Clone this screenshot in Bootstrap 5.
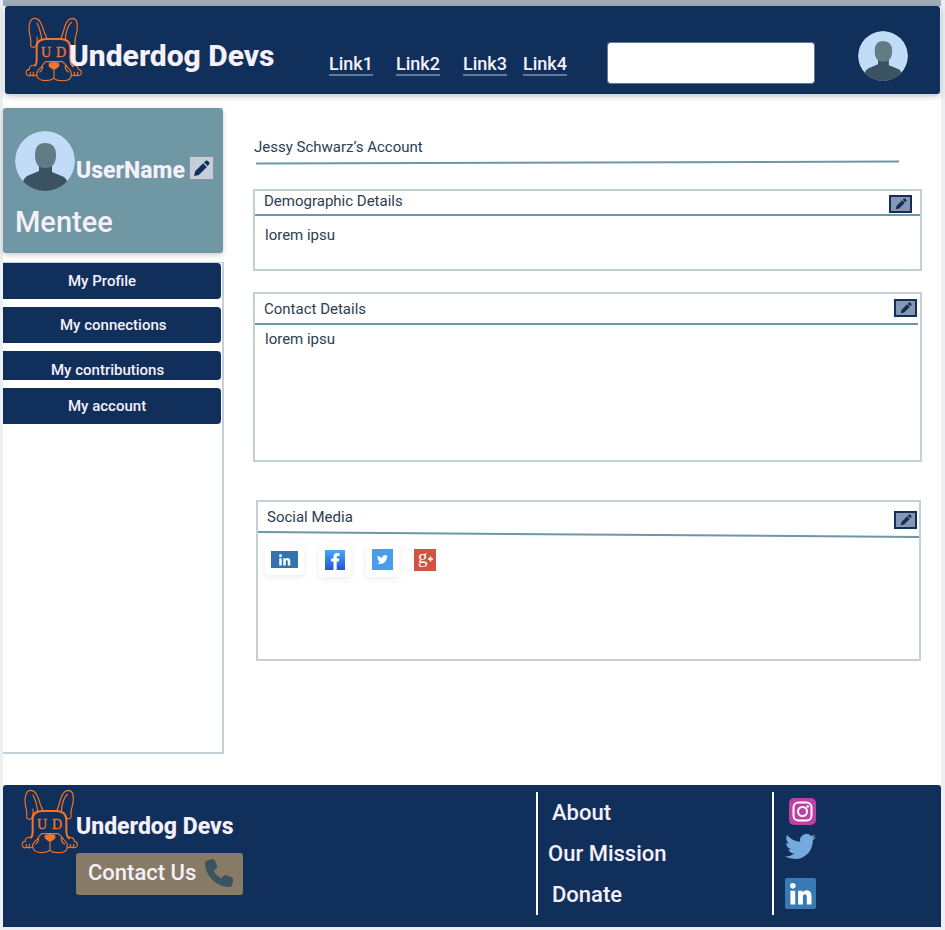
<!DOCTYPE html>
<html lang="en">
<head>
<meta charset="utf-8">
<meta name="viewport" content="width=device-width, initial-scale=1">
<title>Underdog Devs - Account</title>
<link href="https://cdn.jsdelivr.net/npm/bootstrap@5.3.0/dist/css/bootstrap.min.css" rel="stylesheet">
<style>
:root{--navy:#102f5a;--teal:#7097a4;--edge:#c3cfd9;--pale:#f5f0fa;--orange:#f27429}
body{font-family:Roboto,"Liberation Sans",sans-serif;font-size:15px;line-height:20px;color:#2c3e50;background:#ebeff2}
svg{display:block;flex-shrink:0}
.page-sheet{background:#fff;margin:0 4px 0 3px;border-top:6px solid #a0adb8}
.site-head{background:var(--navy);margin:0 1px 0 2px;min-height:88px;padding:11px 32px 0 20px;border-radius:3px;box-shadow:0 2px 6px rgba(0,0,0,.25)}
.brand-zone{flex:0 0 304px}
.dog{width:58px;height:66px;overflow:visible;fill:none;stroke:var(--orange);stroke-width:4;stroke-linejoin:round;stroke-linecap:round}
.dog-letter{font-family:"Liberation Serif",serif;font-size:42px;fill:var(--orange);stroke-width:1}
.plus-letter{font-family:"Liberation Serif",serif;font-size:19px;fill:#fff}
.brand-text{font-weight:800;color:var(--pale);text-decoration:none;white-space:nowrap}
.brand-head{font-size:30px;line-height:40px;margin:19px 0 0 -14px;z-index:1}
.top-links{margin-top:36px}
.top-links a{font-size:18px;line-height:21px;font-weight:500;width:44px;color:var(--pale);text-decoration:none;border-bottom:2px solid #61799a}
.top-links a + a{margin-left:23px}
.top-links a:last-child{margin-left:16px}
.search-box{margin:25px 43px 0 40px;height:42px;min-width:80px;border-radius:3px;border-color:#61799a}
.head-avatar{margin-top:14px}
.side-col{flex:0 0 221px;margin-top:14px}
.user-card{background:var(--teal);height:145px;width:220px;border-radius:3px;padding:23px 9px 0 12px;box-shadow:0 2px 5px rgba(0,0,0,.2);color:var(--pale)}
.user-name{font-size:23px;line-height:28px;font-weight:800;margin:26px 0 0 1px}
.user-role{font-size:29px;line-height:36px;font-weight:500;margin-top:13px}
.edit-btn{padding:0;border:2px solid var(--navy);background:#8598b0;width:23px;height:18px;display:flex;align-items:center;justify-content:center;color:var(--navy);flex-shrink:0}
.edit-user{width:25px;height:24px;border:1px solid #8791a0;background:#c4ced8;margin:25px 0 0 auto}
.side-menu{margin-top:9px;border:2px solid var(--edge);border-left:0;border-top-width:1px;min-height:492px;gap:8px}
.side-btn{border:0;background:var(--navy);color:var(--pale);font-size:15px;line-height:20px;font-weight:500;text-align:left;height:36px;width:218px;border-radius:0 4px 4px 0;padding:0 0 0 65px}
.side-b{padding-left:57px}
.side-c{padding:8px 0 0 48px;height:29px}
.main-col{padding:43px 19px 0 29px;min-width:0}
.page-title{font-size:15px;line-height:20px;font-weight:400;margin:0 0 0 1px}
.rule{width:100%;display:block;stroke:#6c97a4;stroke-width:2;overflow:visible}
.title-rule{height:3px;margin:4px 23px 0 3px}
.title-rule svg{height:3px}
.box{border:2px solid var(--edge)}
.box h2{font-size:15px;line-height:20px;font-weight:400;margin:0}
.box p{margin:4px 0 0 10px}
.box-head{padding:0 2px 0 9px}
.box-demo{margin-top:25px;min-height:82px}
.box-demo .box-head{height:25px;padding-right:8px;border-bottom:2px solid #6c97a4}
.box-demo p{margin-top:9px}
.box-contact{margin-top:21px;min-height:170px}
.box-contact .box-head{height:31px;padding-top:5px;margin-right:2px;padding-right:1px;border-bottom:2px solid #6c97a4}
.box-social{margin:38px 1px 0 3px;min-height:161px}
.box-social .box-head{height:30px;padding-top:5px}
.tiles{gap:15px;padding:5px 0 0 7px}
.tile{background:#fff;border:0;border-radius:4px;padding:7px 6px;box-shadow:0 2px 6px rgba(0,0,0,.08)}
.foot{background:var(--navy);border-radius:3px 3px 0 0;margin-top:31px;margin-bottom:3px;padding:4px 0 12px;display:grid;grid-template-columns:533fr 236fr 169fr;min-height:142px}
.foot-mark{padding-left:18px}
.foot-brand{font-size:23px;line-height:28px;margin:24px 0 0 -3px}
.call-btn{margin:-2px 0 0 73px;background:#877b65;border:0;border-radius:3px;width:167px;height:42px;padding:0 9px 3px 12px;color:var(--pale);font-size:22px;line-height:28px;font-weight:500;white-space:nowrap}
.foot-list{border-left:2px solid #fff;margin-top:3px;padding:4px 0 0 10px}
.foot-list a{font-size:22px;line-height:33px;font-weight:500;color:var(--pale);text-decoration:none;margin-bottom:8px;padding-left:4px}
.foot-list a:last-child{margin-bottom:0}
.foot-list .long{padding-left:0}
.foot-social{padding:6px 0 0 11px}
.foot-social a:nth-child(2){margin-bottom:18px}
</style>
</head>
<body>
<svg width="0" height="0" class="position-absolute" aria-hidden="true">
  <defs>
    <symbol id="dog" viewBox="30 22 174 198">
      <path stroke-width="3.500" d="M62 110C54 116 45 112 47 103C49 92 46 82 43 70C40 52 43 27 58 26C72 25 78 38 82 50C86 64 92 78 96 88M63 108C66 98 68 88 66 82M66 40C72 52 79 76 80 92M168 110C176 114 182 108 180 98C178 86 186 72 187 56C188 38 185 27 173 26C160 26 153 38 149 52C146 64 142 76 138 86M151 90C152 66 160 44 170 38"/>
      <path stroke-width="6" d="M96 88H138C158 89 166 98 166 114V146C166 158 167 164 174 170M96 88C74 88 65 98 65 112V148C65 159 64 164 60 168"/>
      <path stroke-width="3.500" d="M92 156H142C150 160 154 168 158 174C168 182 170 188 169 196C168 211 154 214 140 213C128 213 121 210 117 206C110 211 104 213 93 213C77 213 65 208 65 192C66 182 74 177 80 172C84 164 86 159 92 156ZM117 176V206M82 168Q84 182 74 187M151 168Q150 182 161 187M61 167C45 165 42 173 43 179C33 179 31 190 36 196Q42 201 49 197Q58 201 66 194M46 196V188M55 196V188M170 167C186 165 190 172 190 179C200 180 201 190 197 195Q190 201 183 196Q175 201 168 194M178 196V188M188 196V188"/>
      <path fill="#f27429" d="M103 162Q117 156 131 162V169L121 177H113L103 169Z"/>
      <text class="dog-letter" x="78" y="141">U</text><text class="dog-letter" x="123" y="141">D</text>
    </symbol>
    <symbol id="person" viewBox="0 0 60 60">
      <clipPath id="disc"><circle cx="30" cy="30" r="30"/></clipPath>
      <g clip-path="url(#disc)"><circle cx="30" cy="30" r="30" fill="#c1dcf8"/><path fill="#3b5260" d="M24 33H37V41L49 46Q53 49 52 54L45 60H14L8 51Q9 47 12 45L24 40Z"/><path fill="#627b84" d="M30 12Q41 12 41 24Q41 37 30 37Q20 37 20 24Q20 12 30 12Z"/></g>
    </symbol>
    <symbol id="pencil" viewBox="0 0 16 16"><path fill="currentColor" d="M1 15L2 10.500L9.500 3L13 6.500L5.500 14ZM10.300 2.200L12 .8Q13 .2 14 1L15.200 2.200Q15.900 3 15.200 4L13.800 5.700Z"/></symbol>
    <symbol id="bird" viewBox="0 0 24 20"><path fill="currentColor" d="M23.950 2.570a10 10 0 0 1-2.820.780 4.960 4.960 0 0 0 2.160-2.730c-.950.560-2 .960-3.130 1.190a4.920 4.920 0 0 0-8.380 4.480C7.690 6.090 4.070 4.130 1.640 1.160a4.920 4.920 0 0 0 1.520 6.570 4.900 4.900 0 0 1-2.230-.610v.060a4.920 4.920 0 0 0 3.950 4.830 5 5 0 0 1-2.210.080 4.940 4.940 0 0 0 4.600 3.420A9.870 9.870 0 0 1 0 17.540a14 14 0 0 0 7.550 2.210c9.050 0 14-7.500 14-13.980 0-.210 0-.420-.020-.630a9.940 9.940 0 0 0 2.460-2.550z"/></symbol>
    <symbol id="inmark" viewBox="0 0 24 24"><circle cx="4" cy="3.500" r="2.900" fill="#fff"/><path fill="#fff" d="M1.500 8.500H6.500V23H1.500ZM9.500 8.500H14.200V10.500Q15.700 8.100 18.500 8.100Q23.500 8.100 23.500 14.500V23H18.600V15.500Q18.600 12.200 16.700 12.200Q14.500 12.200 14.500 15.500V23H9.500Z"/></symbol>
  </defs>
</svg>
<div class="page-sheet">
  <header class="site-head d-flex align-items-start">
    <div class="brand-zone d-flex align-items-start">
      <svg class="dog" aria-hidden="true"><use href="#dog"/></svg>
      <a href="#" class="brand-text brand-head position-relative">Underdog Devs</a>
    </div>
    <nav class="top-links d-flex" aria-label="Main">
      <a href="#">Link1</a><a href="#">Link2</a><a href="#">Link3</a><a href="#">Link4</a>
    </nav>
    <input class="form-control search-box flex-fill w-auto" type="search" aria-label="Search">
    <svg class="head-avatar" width="50" height="50" role="img" aria-label="Account"><use href="#person"/></svg>
  </header>

  <div class="d-flex align-items-start">
    <aside class="side-col">
      <section class="user-card">
        <div class="d-flex align-items-start">
          <svg width="60" height="60" aria-hidden="true"><use href="#person"/></svg>
          <div class="user-name">UserName</div>
          <button class="edit-btn edit-user" type="button" aria-label="Edit user"><svg width="17" height="17"><use href="#pencil"/></svg></button>
        </div>
        <div class="user-role">Mentee</div>
      </section>
      <nav class="side-menu d-flex flex-column align-items-start" aria-label="Profile">
        <button class="side-btn" type="button">My Profile</button>
        <button class="side-btn side-b" type="button">My connections</button>
        <button class="side-btn side-c" type="button">My contributions</button>
        <button class="side-btn" type="button">My account</button>
      </nav>
    </aside>

    <main class="main-col flex-fill">
      <h1 class="page-title">Jessy Schwarz’s Account</h1>
      <div class="title-rule"><svg class="rule" viewBox="0 0 100 3" preserveAspectRatio="none" aria-hidden="true"><path d="M0 2.500L100 .5" vector-effect="non-scaling-stroke"/></svg></div>
      <section class="box box-demo">
        <div class="box-head d-flex justify-content-between align-items-start">
          <h2>Demographic Details</h2>
          <button class="edit-btn mt-1" type="button" aria-label="Edit demographic details"><svg width="12" height="12"><use href="#pencil"/></svg></button>
        </div>
        <p>lorem ipsu</p>
      </section>
      <section class="box box-contact">
        <div class="box-head d-flex justify-content-between align-items-start">
          <h2>Contact Details</h2>
          <button class="edit-btn" type="button" aria-label="Edit contact details"><svg width="12" height="12"><use href="#pencil"/></svg></button>
        </div>
        <p>lorem ipsu</p>
      </section>
      <section class="box box-social">
        <div class="box-head d-flex justify-content-between align-items-start">
          <h2>Social Media</h2>
          <button class="edit-btn mt-1" type="button" aria-label="Edit social media"><svg width="12" height="12"><use href="#pencil"/></svg></button>
        </div>
        <svg class="rule" height="5" viewBox="0 0 100 5" preserveAspectRatio="none" aria-hidden="true"><path d="M0 0L100 5" vector-effect="non-scaling-stroke"/></svg>
        <div class="tiles d-flex align-items-center">
          <a href="#" class="tile" aria-label="LinkedIn"><svg width="27" height="17"><rect width="27" height="17" fill="#3273b0"/><use href="#inmark" x="7" y="3" width="13" height="12"/></svg></a>
          <a href="#" class="tile" aria-label="Facebook"><svg width="20" height="20" viewBox="0 0 20 20"><defs><linearGradient id="fb" x2="0" y2="1"><stop stop-color="#4ba6f4"/><stop offset="1" stop-color="#2753d9"/></linearGradient></defs><path fill="url(#fb)" d="M0 0H20V20H0Z"/><path fill="#fff" d="M8.500 20V11.500H6V8.500H8.500V6.500Q8.500 3 12 3H14.500V6H13Q11.700 6 11.700 7.300V8.500H14.300L13.800 11.500H11.700V20Z"/></svg></a>
          <a href="#" class="tile" aria-label="Twitter"><svg width="21" height="21"><rect width="21" height="21" fill="#4b9cea"/><use href="#bird" x="5" y="6" width="11" height="9" color="#fff"/></svg></a>
          <a href="#" aria-label="Google Plus"><svg width="22" height="22" viewBox="0 0 22 22" overflow="visible"><path fill="#cf5542" d="M0 0H22V22H0Z"/><text class="plus-letter" x="4" y="14">g</text><path fill="none" stroke="#fff" stroke-width="1.500" d="M14 10H19M16.500 7.500V12.500"/></svg></a>
        </div>
      </section>
    </main>
  </div>

  <footer class="foot">
    <div>
      <div class="foot-mark d-flex align-items-start">
        <svg class="dog" aria-hidden="true"><use href="#dog"/></svg>
        <a href="#" class="brand-text foot-brand">Underdog Devs</a>
      </div>
      <button class="call-btn d-flex align-items-center justify-content-between" type="button">Contact Us
        <svg width="30" height="30" viewBox="0 0 30 30" aria-hidden="true"><path fill="#3b5260" d="M2 3L8 1Q10 .6 11 2.500L13 8Q13.500 9.500 12 11L9.500 13Q12 17.800 17.200 20.600L19.500 18Q21 16.600 22.500 17.200L28 19.500Q29.600 20.500 29.200 22.500L27.800 27.500Q27.200 29 25.500 29Q15 28.600 8 21.500Q1.200 14.500 1 5Q1 3.500 2 3Z"/></svg>
      </button>
    </div>
    <nav class="foot-list d-flex flex-column align-items-start" aria-label="Footer">
      <a href="#">About</a><a href="#" class="long">Our Mission</a><a href="#">Donate</a>
    </nav>
    <div class="foot-list foot-social d-flex flex-column align-items-start">
      <a href="#" aria-label="Instagram"><svg width="27" height="27" viewBox="0 0 27 27"><rect width="27" height="27" rx="5" fill="#bd40a5"/><g fill="none" stroke="#fff" stroke-width="2"><rect x="4.500" y="4.500" width="18" height="18" rx="5"/><circle cx="13.500" cy="13.500" r="4.500"/></g><circle cx="18.700" cy="8.500" r="1.300" fill="#fff"/></svg></a>
      <a href="#" class="long" aria-label="Twitter"><svg width="31" height="27" color="#76a9dc"><use href="#bird"/></svg></a>
      <a href="#" class="long" aria-label="LinkedIn"><svg width="31" height="31"><rect width="31" height="31" rx="2" fill="#377ab4"/><use href="#inmark" x="4" y="4" width="23" height="24"/></svg></a>
    </div>
  </footer>
</div>
<script src="https://cdn.jsdelivr.net/npm/bootstrap@5.3.0/dist/js/bootstrap.bundle.min.js"></script>
</body>
</html>
